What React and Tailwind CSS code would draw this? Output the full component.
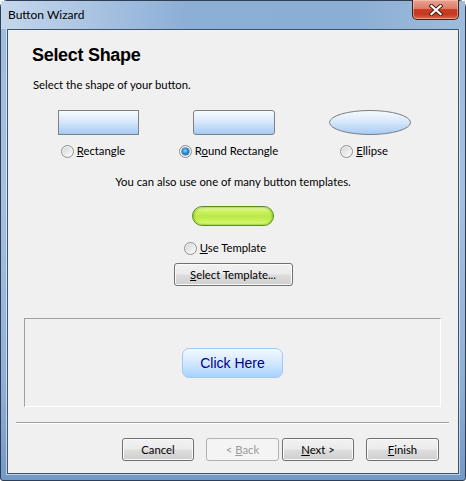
import React from "react";

function Radio({ checked }) {
  return (
    <span className="relative inline-block w-[13px] h-[13px] shrink-0 rounded-full border border-[#8e8f8f] bg-[linear-gradient(135deg,#cfcfcf_0%,#e8e8e8_50%,#ffffff_100%)] shadow-[inset_0_0_0_1px_#f4f4f4]">
      {checked && (
        <span className="absolute left-[2px] top-[2px] w-[7px] h-[7px] rounded-full bg-[radial-gradient(circle_at_45%_40%,#8fd8ff_0%,#2a8ad6_45%,#0c4f93_100%)] shadow-[0_0_0_0.5px_#1c5c9c]" />
      )}
    </span>
  );
}

function RadioLabel({ checked, children, className }) {
  return (
    <div className={"flex items-center gap-[3px] h-[16px] text-[11.3px] leading-[16px] " + (className || "")}>
      <Radio checked={checked} />
      <span>{children}</span>
    </div>
  );
}

function WinButton({ children, disabled, className }) {
  return (
    <div
      className={
        "h-[23px] rounded-[3px] border flex items-center justify-center text-[11.3px] leading-[16px] " +
        (disabled
          ? "border-[#adb2b5] bg-[#f4f4f4] text-[#9a9a9a] "
          : "border-[#707070] bg-[linear-gradient(to_bottom,#f2f2f2_0%,#ebebeb_48%,#dddddd_52%,#cfcfcf_100%)] shadow-[inset_0_0_0_1px_#fbfbfb] text-black ") +
        (className || "")
      }
    >
      {children}
    </div>
  );
}

export default function App() {
  return (
    <div className="w-[466px] h-[481px] bg-white font-['Lato',sans-serif] text-black">
      <div className="w-[466px] h-[481px] flex flex-col border border-[#2f3e52] rounded-t-[7px] rounded-b-[3px] px-[6px] pb-[6px] bg-[linear-gradient(to_bottom,#9dbbdc_0%,#a5c1e0_40%,#8fb0d6_80%,#7399c6_100%)]">
        {/* Title bar */}
        <div className="h-[28px] flex items-start justify-between relative">
          <div className="absolute inset-x-[-6px] top-0 h-[28px] bg-[linear-gradient(to_right,#c4d7ec_0%,#a9c3e1_20%,#8cafd6_40%,#8aaed4_75%,#9fbcdb_100%)]" />
          <span className="relative pl-[1px] pt-[6px] text-[12px] leading-[16px] text-black">Button Wizard</span>
          <div className="relative -mt-[1px] w-[47px] h-[20px] rounded-b-[5px] border border-[#44201a] border-t-0 bg-[linear-gradient(to_bottom,#eba494_0%,#dc7c68_45%,#c83f26_50%,#c4381f_75%,#de6a4c_100%)] shadow-[inset_0_0_0_1px_rgba(255,210,200,0.5)] flex items-center justify-center">
            <svg width="14" height="12" viewBox="0 0 14 12">
              <path d="M2.5 2 L11.5 10 M11.5 2 L2.5 10" stroke="#4a1c14" strokeWidth="4" strokeLinecap="square" />
              <path d="M2.5 2 L11.5 10 M11.5 2 L2.5 10" stroke="#ffffff" strokeWidth="2.2" strokeLinecap="square" />
            </svg>
          </div>
        </div>

        {/* Client area */}
        <div className="flex-1 border border-[#3e536e] bg-[#f0f0f0] shadow-[0_0_0_1px_rgba(255,255,255,0.55)] flex flex-col">
          <div className="pl-[24px] pt-[14px] text-[18px] leading-[22px] font-bold tracking-[-0.3px] font-['Liberation_Sans',Arial,sans-serif]">
            Select Shape
          </div>
          <div className="pl-[25px] mt-[11px] text-[11.3px] leading-[16px]">Select the shape of your button.</div>

          <div className="mt-[17px] ml-[22px] w-[408px] grid grid-cols-3">
            <div className="flex flex-col items-center">
              <div className="w-[81px] h-[25px] border border-[#808080] bg-[linear-gradient(to_bottom,#f8fbff_0%,#d9e9fb_45%,#a6caf5_100%)]" />
              <RadioLabel className="mt-[8px] pr-[10px]">
                <span className="underline">R</span>ectangle
              </RadioLabel>
            </div>
            <div className="flex flex-col items-center">
              <div className="w-[82px] h-[25px] rounded-[3px] border border-[#808080] bg-[linear-gradient(to_bottom,#f8fbff_0%,#d9e9fb_45%,#a6caf5_100%)]" />
              <RadioLabel checked className="mt-[8px] pr-[11px]">
                R<span className="underline">o</span>und Rectangle
              </RadioLabel>
            </div>
            <div className="flex flex-col items-center">
              <svg width="82" height="25" viewBox="0 0 82 25" className="block">
                <defs>
                  <linearGradient id="eg" x1="0" y1="0" x2="0" y2="1">
                    <stop offset="0" stopColor="#f8fbff" />
                    <stop offset="0.45" stopColor="#d9e9fb" />
                    <stop offset="1" stopColor="#a6caf5" />
                  </linearGradient>
                </defs>
                <ellipse cx="41" cy="12.5" rx="40.5" ry="12" fill="url(#eg)" stroke="#7c7c7c" strokeWidth="1" />
              </svg>
              <RadioLabel className="mt-[8px] pr-[12px]">
                <span className="underline">E</span>llipse
              </RadioLabel>
            </div>
          </div>

          <div className="mt-[15px] text-center text-[11.3px] leading-[16px]">
            You can also use one of many button templates.
          </div>

          <div className="mt-[16px] self-center w-[82px] h-[20px] rounded-full border border-[#5a8f1a] bg-[linear-gradient(to_bottom,#f4ffd0_0%,#d2f56c_18%,#bce848_50%,#c8f258_75%,#e6ff86_100%)] shadow-[inset_0_0_2px_1px_rgba(110,170,20,0.6)]" />

          <div className="mt-[14px] self-center pr-[16px]">
            <RadioLabel>
              <span className="underline">U</span>se Template
            </RadioLabel>
          </div>

          <WinButton className="mt-[7px] self-center w-[119px]">
            <span>
              <span className="underline">S</span>elect Template...
            </span>
          </WinButton>

          <div className="mt-[32px] ml-[16px] w-[417px] h-[89px] border-t border-l border-[#a0a0a0] border-b-white border-r-white border-b border-r flex items-center justify-center">
            <div className="w-[101px] h-[30px] rounded-[7px] border border-[#9fcaf5] bg-[linear-gradient(to_bottom,#f2f9ff_0%,#d6eaff_45%,#a9d2ff_100%)] flex items-center justify-center text-[14px] leading-[16px] text-[#00007f] font-['Liberation_Sans',Arial,sans-serif]">
              Click Here
            </div>
          </div>

          <div className="mt-[15px] ml-[8px] w-[433px] h-[2px] border-t border-[#a0a0a0] border-b border-b-white" />

          <div className="mt-[14px] flex justify-end pr-[19px]">
            <WinButton className="w-[72px]">Cancel</WinButton>
            <WinButton disabled className="w-[73px] ml-[12px]">
              <span>
                &lt; <span className="underline">B</span>ack
              </span>
            </WinButton>
            <WinButton className="w-[72px] ml-[3px]">
              <span>
                <span className="underline">N</span>ext &gt;
              </span>
            </WinButton>
            <WinButton className="w-[73px] ml-[12px]">
              <span>
                <span className="underline">F</span>inish
              </span>
            </WinButton>
          </div>
        </div>
      </div>
    </div>
  );
}
